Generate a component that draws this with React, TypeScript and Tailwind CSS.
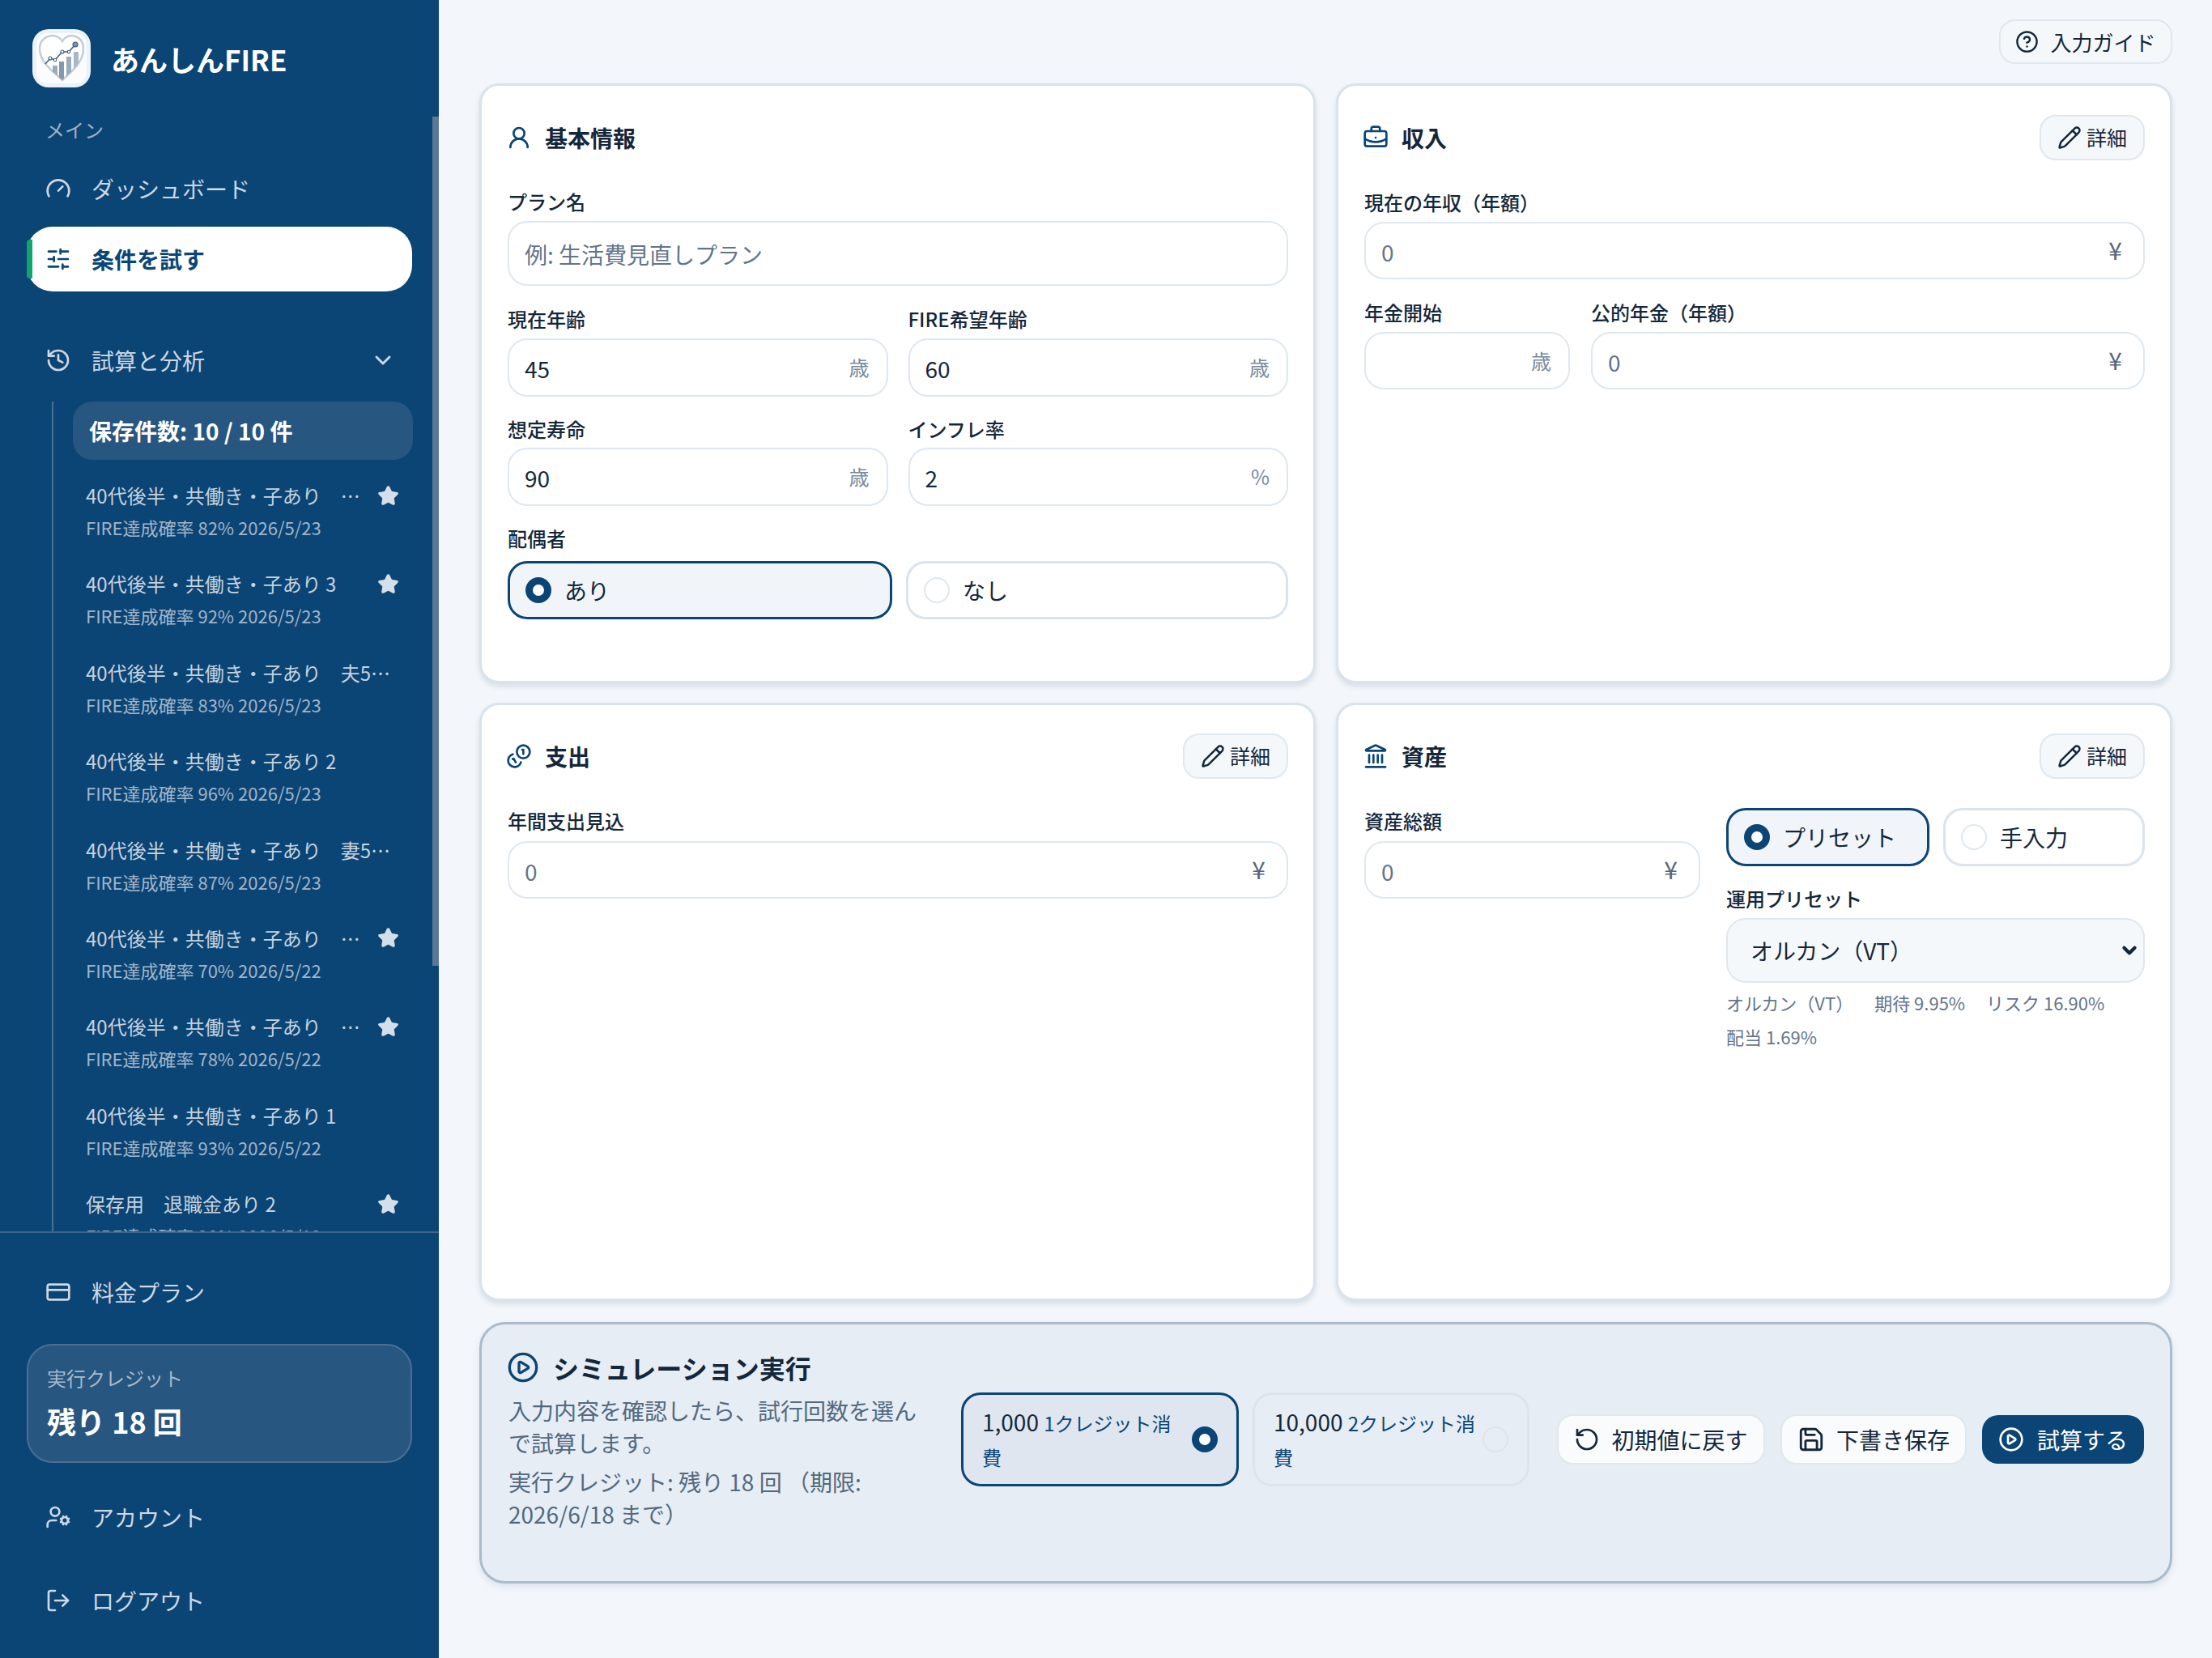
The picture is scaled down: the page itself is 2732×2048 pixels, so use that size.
import React from "react";
import {
  Gauge, SlidersHorizontal, History, ChevronDown, Star, CreditCard, UserCog, LogOut,
  UserRound, BriefcaseBusiness, Landmark, Pencil, CircleHelp, CirclePlay, RotateCcw, Save,
} from "lucide-react";

function Logo() {
  const heart = "M37 63 C27 53 9 42 9 24 C9 14 17 8 25 8 C30 8 35 11 37 15 C39 11 44 8 48 8 C56 8 63 14 63 24 C63 42 47 53 37 63 Z";
  return (
    <div className="w-[72px] h-[72px] rounded-[20px] bg-[#edf2f7] flex items-center justify-center shrink-0">
      <svg viewBox="0 0 72 72" className="w-[72px] h-[72px]">
        <rect x="5" y="5" width="62" height="62" rx="14" fill="#fbfcfe" />
        <defs>
          <clipPath id="hc"><path d={heart} /></clipPath>
        </defs>
        <path d={heart} fill="#ffffff" stroke="#c3ced9" strokeWidth="2.5" />
        <g clipPath="url(#hc)">
          <rect x="25" y="45" width="6" height="20" fill="#9aabbd" />
          <rect x="33" y="40" width="6" height="25" fill="#8598ad" />
          <rect x="42" y="34" width="6" height="30" fill="#9aabbd" />
          <rect x="51" y="28" width="6" height="36" fill="#a9b8c8" />
        </g>
        <path d="M16 43 L22 36 L28 38 L37 28 L45 28 L53 19" fill="none" stroke="#3e5a78" strokeWidth="1.5" />
        <circle cx="22" cy="36" r="2" fill="#fff" stroke="#3e5a78" strokeWidth="1.1" />
        <circle cx="28" cy="38" r="1.8" fill="#fff" stroke="#3e5a78" strokeWidth="1.1" />
        <circle cx="37" cy="28" r="2" fill="#fff" stroke="#3e5a78" strokeWidth="1.1" />
        <circle cx="45" cy="28" r="1.8" fill="#fff" stroke="#3e5a78" strokeWidth="1.1" />
        <circle cx="53" cy="19" r="3" fill="#7f93a8" stroke="#3e5a78" strokeWidth="1.1" />
      </svg>
    </div>
  );
}

function CoinsIcon() {
  return (
    <svg width="32" height="32" viewBox="0 0 24 24" fill="none" stroke="currentColor" strokeWidth="2" strokeLinecap="round" strokeLinejoin="round">
      <path d="M13.744 17.736a6 6 0 1 1-7.48-7.48" />
      <path d="M15 6h1v4" />
      <path d="m6.134 14.768.866-.5 2 3.464" />
      <circle cx="16" cy="8" r="6" />
    </svg>
  );
}

function NavItem({ icon, label }: { icon: React.ReactNode; label: string }) {
  return (
    <div className="mx-[33px] h-[80px] pl-[23px] flex items-center gap-[25px] text-[28px] text-[#ced8e3]">
      {icon}
      <span>{label}</span>
    </div>
  );
}

const items: { name: string; sub: string; star?: boolean }[] = [
  { name: "40代後半・共働き・子あり　夫55歳退職", sub: "FIRE達成確率 82% 2026/5/23", star: true },
  { name: "40代後半・共働き・子あり 3", sub: "FIRE達成確率 92% 2026/5/23", star: true },
  { name: "40代後半・共働き・子あり　夫55歳退職", sub: "FIRE達成確率 83% 2026/5/23" },
  { name: "40代後半・共働き・子あり 2", sub: "FIRE達成確率 96% 2026/5/23" },
  { name: "40代後半・共働き・子あり　妻55歳退職", sub: "FIRE達成確率 87% 2026/5/23" },
  { name: "40代後半・共働き・子あり　夫60歳退職", sub: "FIRE達成確率 70% 2026/5/22", star: true },
  { name: "40代後半・共働き・子あり　妻60歳退職", sub: "FIRE達成確率 78% 2026/5/22", star: true },
  { name: "40代後半・共働き・子あり 1", sub: "FIRE達成確率 93% 2026/5/22" },
  { name: "保存用　退職金あり 2", sub: "FIRE達成確率 90% 2026/5/19", star: true },
];

function Sidebar() {
  return (
    <aside className="relative w-[542px] h-[2048px] shrink-0 bg-[#0b4575] flex flex-col overflow-hidden">
      <div className="h-[1521px] overflow-hidden shrink-0">
        <div className="mt-[36px] ml-[40px] flex items-center gap-[25px]">
          <Logo />
          <span className="text-[35px] font-semibold text-white leading-none">あんしんFIRE</span>
        </div>
        <div className="mt-[36px] ml-[56px] text-[24px] leading-[32px] text-[#9fb2c6]">メイン</div>
        <div className="mt-[17px]">
          <NavItem icon={<Gauge size={32} strokeWidth={2} />} label="ダッシュボード" />
        </div>
        <div className="relative mt-[7px] mx-[33px] h-[80px] pl-[23px] bg-white rounded-[32px] flex items-center gap-[25px] text-[28px] font-bold text-[#0b4575]">
          <div className="absolute left-0 top-[16px] w-[7px] h-[48px] bg-[#0fa56d] rounded-l-[4px]" />
          <SlidersHorizontal size={32} strokeWidth={2} />
          <span>条件を試す</span>
        </div>
        <div className="mt-[45px] mx-[33px] h-[80px] pl-[23px] pr-[20px] flex items-center gap-[25px] text-[28px] text-[#ced8e3]">
          <History size={32} strokeWidth={2} />
          <span className="flex-1">試算と分析</span>
          <ChevronDown size={32} strokeWidth={2.2} />
        </div>
        <div className="mt-[11px] ml-[64px] mr-[32px] border-l-2 border-[#4a7095] pl-[24px]">
          <div className="h-[72px] rounded-[24px] bg-[#275680] pl-[20px] flex items-center text-[28px] font-bold text-white">
            保存件数: 10 / 10 件
          </div>
          <div className="mt-[7px]">
            {items.map((it, i) => (
              <div key={i} className="h-[109.4px] pt-[20px] pl-[16px] pr-[17px]">
                <div className="flex items-center h-[34px]">
                  <span className={it.star ? "w-[344px] truncate text-[24px] leading-[34px] text-[#c6d2de]" : "w-[387px] truncate text-[24px] leading-[34px] text-[#c6d2de]"}>{it.name}</span>
                  {it.star && <Star size={27} fill="#d5dfe9" stroke="#d5dfe9" strokeWidth={2} className="ml-[17px] shrink-0" />}
                </div>
                <div className="mt-[5px] text-[22px] leading-[34px] text-[#a2b5c8]">{it.sub}</div>
              </div>
            ))}
          </div>
        </div>
      </div>
      <div className="flex-1 border-t-2 border-[#3c668d]">
        <div className="mt-[33px]">
          <NavItem icon={<CreditCard size={32} strokeWidth={2} />} label="料金プラン" />
        </div>
        <div className="mt-[24px] mx-[33px] h-[147px] rounded-[32px] bg-[#275680] border-2 border-[#4a7095] pl-[23px] pt-[22px]">
          <div className="text-[24px] leading-[36px] text-[#a9bacb]">実行クレジット</div>
          <div className="mt-[11px] text-[36px] leading-[48px] font-bold text-white">残り 18 回</div>
        </div>
        <div className="mt-[27px]">
          <NavItem icon={<UserCog size={32} strokeWidth={2} />} label="アカウント" />
        </div>
        <div className="mt-[23px]">
          <NavItem icon={<LogOut size={32} strokeWidth={2} />} label="ログアウト" />
        </div>
      </div>
      <div className="absolute right-0 top-[144px] w-[8px] h-[1049px] bg-[#5c7894]" />
    </aside>
  );
}

function Label({ children, className = "" }: { children: React.ReactNode; className?: string }) {
  return <div className={"text-[24px] leading-[32px] font-medium text-[#14273a] " + className}>{children}</div>;
}

function Input({ value, placeholder, suffix, h = "h-[71px]" }: { value?: string; placeholder?: string; suffix?: string; h?: string }) {
  return (
    <div className={h + " rounded-[24px] border-2 border-[#dfe7ef] bg-white flex items-center pl-[19px] pr-[21px]"}>
      <input
        readOnly
        value={value ?? ""}
        placeholder={placeholder}
        className="flex-1 min-w-0 bg-transparent outline-none text-[28px] pt-[2px] text-[#14273a] placeholder:text-[#64748b]"
      />
      {suffix && <span className={suffix === "¥" ? "text-[30px] mr-[5px] mb-[3px] text-[#55677d]" : "text-[25px] text-[#7a8a9c]"}>{suffix}</span>}
    </div>
  );
}

function RadioDot({ on }: { on?: boolean }) {
  return on ? (
    <span className="w-[32px] h-[32px] rounded-full border-[9px] border-[#0b4575] bg-white shrink-0" />
  ) : (
    <span className="w-[32px] h-[32px] rounded-full border-2 border-[#dfe7ef] bg-white shrink-0" />
  );
}

function Radio({ label, on }: { label: string; on?: boolean }) {
  return (
    <div
      className={
        (on ? "border-[3px] border-[#0b4575] bg-[#f1f5f9] " : "border-[3px] border-[#dbe3ec] bg-white ") +
        "h-[72px] rounded-[24px] flex items-center gap-[16px] pl-[19px] text-[28px] text-[#14273a]"
      }
    >
      <RadioDot on={on} />
      <span>{label}</span>
    </div>
  );
}

function Card({ children, pt }: { children: React.ReactNode; pt: string }) {
  return (
    <section className={pt + " rounded-[24px] border-[3px] border-[#d9e3ec] bg-white shadow-[0_4px_6px_rgba(15,50,90,0.12)] pl-[32px] pr-[31px] min-w-0"}>
      {children}
    </section>
  );
}

function CardHead({ icon, title, detail }: { icon: React.ReactNode; title: string; detail?: boolean }) {
  return (
    <div className="h-[56px] flex items-center justify-between">
      <div className="-ml-[2px] flex items-center gap-[16px] text-[#0b4575]">
        {icon}
        <span className="text-[28px] font-bold text-[#14273a]">{title}</span>
      </div>
      {detail && (
        <div className="w-[130px] h-[56px] rounded-[20px] border-2 border-[#dfe7ef] bg-[#f5f8fb] flex items-center justify-center gap-[6px] text-[25px] text-[#14273a]">
          <Pencil size={30} strokeWidth={2} />
          <span>詳細</span>
        </div>
      )}
    </div>
  );
}

function Main() {
  return (
    <main className="flex-1 min-w-0 bg-[#f3f7fb] pl-[50px] pr-[49px]">
      <div className="h-[103px] pt-[24px] flex justify-end items-start">
        <div className="w-[214px] h-[55px] rounded-[20px] border-2 border-[#dfe7ef] bg-[#f5f8fb] flex items-center justify-center gap-[14px] text-[26px] text-[#14273a]">
          <CircleHelp size={29} strokeWidth={2} />
          <span>入力ガイド</span>
        </div>
      </div>
      <div className="grid grid-cols-2 grid-rows-[741px_739px] gap-x-[25px] gap-y-[24px]">
        <Card pt="pt-[36px]">
          <CardHead icon={<UserRound size={32} strokeWidth={2} />} title="基本情報" />
          <Label className="mt-[35px]">プラン名</Label>
          <div className="mt-[8px]"><Input h="h-[80px]" placeholder="例: 生活費見直しプラン" /></div>
          <div className="mt-[25px] grid grid-cols-2 gap-x-[25px] gap-y-[24px]">
            <div>
              <Label>現在年齢</Label>
              <div className="mt-[8px]"><Input h="h-[72px]" value="45" suffix="歳" /></div>
            </div>
            <div>
              <Label>FIRE希望年齢</Label>
              <div className="mt-[8px]"><Input h="h-[72px]" value="60" suffix="歳" /></div>
            </div>
            <div>
              <Label>想定寿命</Label>
              <div className="mt-[7px]"><Input h="h-[72px]" value="90" suffix="歳" /></div>
            </div>
            <div>
              <Label>インフレ率</Label>
              <div className="mt-[7px]"><Input h="h-[72px]" value="2" suffix="%" /></div>
            </div>
          </div>
          <Label className="mt-[24px]">配偶者</Label>
          <div className="mt-[12px] grid grid-cols-[475px_1fr] gap-x-[17px]">
            <Radio label="あり" on />
            <Radio label="なし" />
          </div>
        </Card>
        <Card pt="pt-[36px]">
          <CardHead icon={<BriefcaseBusiness size={32} strokeWidth={2} />} title="収入" detail />
          <Label className="mt-[36px]">現在の年収（年額）</Label>
          <div className="mt-[8px]"><Input placeholder="0" suffix="¥" /></div>
          <div className="mt-[25px] flex gap-[26px]">
            <div className="w-[254px]">
              <Label>年金開始</Label>
              <div className="mt-[8px]"><Input suffix="歳" /></div>
            </div>
            <div className="flex-1">
              <Label>公的年金（年額）</Label>
              <div className="mt-[8px]"><Input placeholder="0" suffix="¥" /></div>
            </div>
          </div>
        </Card>
        <Card pt="pt-[35px]">
          <CardHead icon={<CoinsIcon />} title="支出" detail />
          <Label className="mt-[36px]">年間支出見込</Label>
          <div className="mt-[9px]"><Input placeholder="0" suffix="¥" /></div>
        </Card>
        <Card pt="pt-[35px]">
          <CardHead icon={<Landmark size={32} strokeWidth={2} />} title="資産" detail />
          <div className="mt-[36px] flex gap-[32px]">
            <div className="w-[415px]">
              <Label>資産総額</Label>
              <div className="mt-[9px]"><Input placeholder="0" suffix="¥" /></div>
            </div>
            <div className="flex-1 min-w-0">
              <div className="grid grid-cols-[251px_1fr] gap-x-[17px]">
                <Radio label="プリセット" on />
                <Radio label="手入力" />
              </div>
              <Label className="mt-[24px]">運用プリセット</Label>
              <div className="relative mt-[8px]">
                <select defaultValue="vt" className="appearance-none w-full h-[80px] rounded-[24px] border-2 border-[#dfe7ef] bg-[#f5f8fb] pl-[28px] pr-[40px] text-[28px] text-[#14273a] outline-none">
                  <option value="vt">オルカン（VT）</option>
                </select>
                <ChevronDown size={26} strokeWidth={4} className="absolute right-[6px] top-[27px] text-[#14273a] pointer-events-none" />
              </div>
              <div className="mt-[3px] flex flex-wrap gap-x-[26px] text-[22px] leading-[42px] text-[#64748b]">
                <span>オルカン（VT）</span>
                <span>期待 9.95%</span>
                <span>リスク 16.90%</span>
                <span>配当 1.69%</span>
              </div>
            </div>
          </div>
        </Card>
      </div>
      <section className="mt-[26px] h-[323px] rounded-[32px] border-[3px] border-[#a9bbcd] bg-[#e6edf5] shadow-[0_4px_8px_rgba(15,50,90,0.1)] pl-[33px] pr-[32px] pb-[32px] flex items-center">
        <div className="w-[510px] shrink-0">
          <div className="-ml-[2px] flex items-center gap-[17px] text-[#0b4575]">
            <CirclePlay size={40} strokeWidth={2} />
            <span className="text-[32px] font-bold leading-[44px] text-[#14273a]">シミュレーション実行</span>
          </div>
          <p className="mt-[11px] text-[28px] leading-[40px] text-[#53697f]">入力内容を確認したら、試行回数を選んで試算します。</p>
          <p className="mt-[8px] text-[28px] leading-[40px] text-[#53697f]">実行クレジット: 残り 18 回 （期限: 2026/6/18 まで）</p>
        </div>
        <div className="ml-[49px] -mt-[2px] flex gap-[17px]">
          <div className="w-[343px] h-[116px] rounded-[24px] border-[3px] border-[#0b4575] bg-[#dfe6ef] pl-[23px] pr-[23px] flex items-center gap-[4px]">
            <div className="flex-1 text-[28px] text-[#14273a] leading-[40px]">
              <span>1,000</span> <span className="text-[24px] text-[#0b4575]">1クレジット消費</span>
            </div>
            <RadioDot on />
          </div>
          <div className="w-[342px] h-[116px] rounded-[24px] border-[3px] border-[#dce4ec] bg-[#e6edf5] pl-[23px] pr-[23px] flex items-center gap-[4px]">
            <div className="flex-1 text-[28px] text-[#14273a] leading-[40px]">
              <span>10,000</span> <span className="text-[24px] text-[#0b4575]">2クレジット消費</span>
            </div>
            <span className="w-[32px] h-[32px] rounded-full border-2 border-[#dce4ec] shrink-0" />
          </div>
        </div>
        <div className="ml-[34px] -mt-[2px] flex items-center gap-[19px]">
          <div className="w-[257px] h-[62px] rounded-[20px] border-2 border-[#dfe7ef] bg-[#fafbfd] flex items-center justify-center gap-[14px] text-[28px] text-[#14273a]">
            <RotateCcw size={32} strokeWidth={2} />
            <span>初期値に戻す</span>
          </div>
          <div className="w-[230px] h-[62px] rounded-[20px] border-2 border-[#dfe7ef] bg-[#fafbfd] flex items-center justify-center gap-[14px] text-[28px] text-[#14273a]">
            <Save size={34} strokeWidth={2} />
            <span>下書き保存</span>
          </div>
          <div className="w-[200px] h-[60px] rounded-[20px] bg-[#0b4575] flex items-center justify-center gap-[16px] text-[28px] text-white">
            <CirclePlay size={32} strokeWidth={2} />
            <span>試算する</span>
          </div>
        </div>
      </section>
    </main>
  );
}

export default function App() {
  return (
    <div className="flex w-[2732px] h-[2048px] overflow-hidden font-['Noto_Sans_CJK_JP','Noto_Sans',sans-serif]">
      <Sidebar />
      <Main />
    </div>
  );
}
